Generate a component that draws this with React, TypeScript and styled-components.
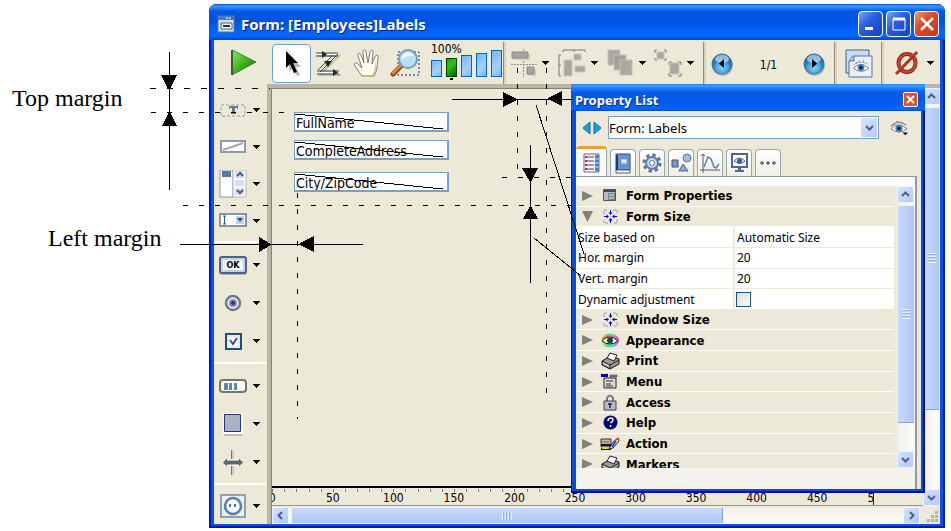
import React from "react";
import styled, { createGlobalStyle } from "styled-components";

const ui = `"DejaVu Sans Condensed", "Open Sans", sans-serif`;
const listFont = `"Noto Sans", sans-serif`;

const Global = createGlobalStyle`
  * { box-sizing: border-box; }
  body { margin: 0; background: #fff; font-family: ${ui}; font-size: 12px; color: #000; }
  button { font: inherit; color: inherit; border: 0; padding: 0; background: none; display: flex; align-items: center; justify-content: center; }
  svg { display: block; flex: none; }
`;

/* ---------- page ---------- */
const Page = styled.main`
  position: relative;
  display: grid;
  grid-template-columns: 209px minmax(0, 1fr);
  min-height: 100vh;
  padding: 4px 6px 5px 0;
`;
const Notes = styled.aside`
  font: 24px/28px "Liberation Serif", serif;
  padding: 80px 0 0 12px;
`;
const Note = styled.p<{ $indent?: boolean }>`
  margin: 0 0 112px;
  padding-left: ${(p) => (p.$indent ? 36 : 0)}px;
  white-space: nowrap;
`;
const Overlay = styled.svg`
  position: absolute;
  left: 0;
  top: 0;
  pointer-events: none;
`;

/* ---------- window ---------- */
const Window = styled.section`
  position: relative;
  display: flex;
  flex-direction: column;
  min-width: 0;
  border-radius: 8px 8px 0 0;
  background: #0a52e8;
  padding: 0 5px 4px;
  box-shadow: inset 2px 0 #0019cf, inset -2px 0 #001994, inset 0 -2px #001ba8;
`;
const TitleBar = styled.header`
  display: flex;
  align-items: center;
  gap: 6px;
  height: 36px;
  margin: 0 -5px;
  padding: 3px 6px 0 8px;
  border-radius: 8px 8px 0 0;
  background: linear-gradient(#0a50d8 0, #3a94ff 2px, #2684fc 4px, #0058e6 7px, #0053dd 18px, #0062fa 26px, #0068ff 32px, #0048c8 36px);
  color: #fff;
`;
const Title = styled.h1`
  flex: 1;
  margin: 0;
  font: bold 15px/24px "Noto Sans", sans-serif;
  text-shadow: 1px 1px #0a1883;
`;
const CaptionButtons = styled.div`
  display: flex;
  gap: 3px;
`;
const CaptionButton = styled.button<{ $close?: boolean }>`
  width: 25px;
  height: 26px;
  border: 1px solid #fff;
  border-radius: 4px;
  background: ${(p) =>
    p.$close
      ? "linear-gradient(135deg, #f0997d, #e0492a 40%, #c63a12)"
      : "linear-gradient(135deg, #7ba4f4, #2c5fe0 40%, #1040c8)"};
`;
const Toolbar = styled.div`
  display: flex;
  align-items: stretch;
  height: 44px;
  background: #ece9d8;
  padding-top: 2px;
`;
const Tool = styled.button<{ $w: number; $on?: boolean }>`
  width: ${(p) => p.$w}px;
  margin: 2px 0 1px;
  border: 1px solid ${(p) => (p.$on ? "#6f9fcc" : "transparent")};
  border-radius: 4px;
  background: ${(p) => (p.$on ? "#fff" : "none")};
`;
const MenuTools = styled.div`
  display: flex;
  padding-right: 5px;
`;
const MenuTool = styled.button`
  width: 48px;
  gap: 5px;
`;
const NullTool = styled.button`
  width: 56px;
  gap: 8px;
  padding-left: 4px;
`;
const Sep = styled.div`
  width: 3px;
  border-left: 1px solid #8f8c80;
  background: #d8d2bd;
`;
const ZoomLevel = styled.div`
  width: 80px;
  padding-left: 8px;
  font-size: 12px;
  line-height: 15px;
`;
const Bars = styled.div`
  display: flex;
  align-items: flex-end;
  gap: 4px;
  height: 20px;
`;
const Bar = styled.button<{ $h: number; $on?: boolean }>`
  width: 11px;
  height: ${(p) => p.$h}px;
  border: 1px solid ${(p) => (p.$on ? "#004000" : "#0068c0")};
  background: ${(p) =>
    p.$on ? "linear-gradient(135deg,#18b010,#30c010 40%,#006000)" : "linear-gradient(135deg,#70b8f8,#a4d0ff 60%,#78b8f8)"};
`;
const ZoomMark = styled.div`
  width: 3px;
  height: 2px;
  margin: 1px 0 0 19px;
  background: #000;
`;
const Pager = styled.div`
  flex: 1;
  display: flex;
  align-items: center;
  justify-content: space-between;
  padding: 4px 8px 0 5px;
  font-size: 12px;
`;

/* ---------- work area ---------- */
const Work = styled.div`
  flex: 1;
  display: grid;
  grid-template-columns: 53px minmax(0, 1fr);
  background: #ece9d8;
`;
const Palette = styled.nav`
  padding-top: 7px;
`;
const PaletteGroup = styled.div<{ $row: number; $line: boolean }>`
  display: grid;
  grid-auto-rows: ${(p) => p.$row}px;
  margin: ${(p) => (p.$line ? "2px 1px 0 0" : "0")};
  padding-top: ${(p) => (p.$line ? 3 : 0)}px;
  border-top: ${(p) => (p.$line ? "2px solid #fff" : "0")};
`;
const PaletteItem = styled.button`
  gap: 5px;
  padding-left: 4px;
  justify-content: flex-start;
`;
const Glyph = styled.span`
  display: flex;
  width: 30px;
  justify-content: center;
`;
const Editor = styled.div`
  display: grid;
  grid-template-columns: minmax(0, 1fr) 17px;
  grid-template-rows: 1fr 20px 18px;
  border: solid #bab6a4;
  border-width: 4px 0 0 4px;
  box-shadow: inset 1px 1px #85826f;
`;
const Canvas = styled.div`
  display: flex;
  flex-direction: column;
  align-items: flex-start;
  padding: 24px 0 0 23px;
`;
const FormField = styled.label<{ $gap: number }>`
  position: relative;
  display: block;
  width: 155px;
  height: 20px;
  margin-bottom: ${(p) => p.$gap}px;
  border: solid #7f9fbe;
  border-width: 1px 2px 2px 1px;
  background: #fff;
`;
const FieldInput = styled.input`
  display: block;
  width: 100%;
  height: 17px;
  padding: 2px 0 0 1px;
  border: 0;
  background: none;
  font: 14px/15px ${ui};
  outline: 0;
`;
const Strike = styled.svg`
  position: absolute;
  left: 0;
  top: 0;
`;
const Ruler = styled.div`
  margin-left: 1px;
  border-top: 2px solid #000;
  border-bottom: 1px solid #9a978a;
  overflow: hidden;
`;
const Scale = styled.div`
  width: 602px;
  height: 17px;
  overflow: hidden;
  border-right: 1px solid #222;
`;
const Marks = styled.div`
  display: grid;
  grid-template-columns: repeat(11, 1fr);
  width: 666px;
  margin-left: -30px;
`;
const Mark = styled.div`
  display: grid;
  grid-template-columns: repeat(5, 1fr);
  justify-items: center;
  font-size: 12px;
  line-height: 13px;
  & > i { width: 2px; height: 3px; background: linear-gradient(90deg, #fff 50%, #77756a 50%); margin-top: 1px; }
  & > span { grid-column: 1 / -1; }
`;

/* ---------- scroll bars ---------- */
const Scroll = styled.div<{ $x?: boolean }>`
  display: flex;
  flex-direction: ${(p) => (p.$x ? "row" : "column")};
  gap: 2px;
  min-width: 0;
  background: linear-gradient(${(p) => (p.$x ? "180deg" : "90deg")}, #f0efe9, #fffffb);
`;
const ScrollButton = styled.button`
  flex: none;
  width: 17px;
  height: 17px;
  border: 1px solid #eef3ff;
  border-radius: 2px;
  background: linear-gradient(135deg, #d5e1ff, #b2c9fa);
`;
const Thumb = styled.div<{ $x?: boolean; $share: number }>`
  flex: ${(p) => p.$share} 1 0;
  display: flex;
  align-items: center;
  justify-content: center;
  border-radius: 2px;
  border: 1px solid #eaf0ff;
  border-${(p) => (p.$x ? "right" : "bottom")}-color: #83a5dc;
  background: linear-gradient(${(p) => (p.$x ? "180deg" : "90deg")}, #c8d8ff, #bacdfa 60%, #aec6f8);
`;
const Grip = styled.div<{ $x?: boolean }>`
  width: ${(p) => (p.$x ? 10 : 8)}px;
  height: ${(p) => (p.$x ? 8 : 10)}px;
  background: repeating-linear-gradient(${(p) => (p.$x ? "90deg" : "180deg")}, #eef4ff 0 1px, #8cb0f8 1px 2px, #c0d2fb 2px 3px);
`;
const Track = styled.div<{ $share: number }>`
  flex: ${(p) => p.$share} 1 0;
`;
const Corner = styled.div`
  display: flex;
  align-items: flex-end;
  justify-content: flex-end;
  grid-row: 3;
  grid-column: 2;
`;
const VScrollCell = styled.div`
  grid-row: 1 / span 2;
  grid-column: 2;
  display: grid;
`;
const HScrollCell = styled.div`
  display: grid;
  margin: 1px 3px 0 1px;
`;

/* ---------- floating property list ---------- */
const Panel = styled.section`
  position: absolute;
  right: 20px;
  top: 80px;
  width: 354px;
  padding: 0 4px 4px 5px;
  background: #0a4ce0;
  box-shadow: inset 1px 0 #0019cf, inset -2px 0 #00138c, inset 0 -2px #00138c;
`;
const PanelTitle = styled.header`
  display: flex;
  align-items: center;
  justify-content: space-between;
  height: 27px;
  margin: 0 -4px 0 -5px;
  padding: 4px 7px 0 4px;
  background: linear-gradient(#1c60dc 0, #4aa0ff 1px, #2480f8 4px, #0858e4 9px, #0059ea 18px, #0068ff 25px, #0048c8 27px);
  color: #fff;
`;
const PanelHeading = styled.h2`
  margin: 0;
  font: bold 13px/18px ${listFont};
  text-shadow: 1px 1px #0a2a9a;
`;
const PanelClose = styled.button`
  width: 15px;
  height: 15px;
  border: 1px solid #fff;
  border-radius: 2px;
  background: #e0502e;
`;
const PanelBody = styled.div`
  background: #ece9d8;
  padding-right: 4px;
`;
const Picker = styled.div`
  display: flex;
  align-items: center;
  gap: 6px;
  padding: 5px 8px 7px 6px;
`;
const SelectBox = styled.div`
  position: relative;
  flex: 1;
  height: 23px;
  border: 1px solid #7f9db9;
  background: #fff;
`;
const Select = styled.select`
  appearance: none;
  width: 100%;
  height: 21px;
  border: 0;
  padding: 0 20px 0 0;
  background: none;
  font: 13px ${listFont};
  color: #000;
`;
const SelectArrow = styled.span`
  position: absolute;
  right: 1px;
  top: 1px;
  display: flex;
  align-items: center;
  justify-content: center;
  width: 16px;
  height: 19px;
  background: linear-gradient(135deg, #dbe5ff, #b4c8f8);
  pointer-events: none;
`;
const EyeButton = styled.button`
  margin-left: 4px;
  width: 20px;
`;
const Tabs = styled.div`
  display: flex;
  align-items: flex-end;
  gap: 3px;
  height: 30px;
`;
const Tab = styled.button<{ $on?: boolean }>`
  width: ${(p) => (p.$on ? 31 : 26)}px;
  height: ${(p) => (p.$on ? 30 : 27)}px;
  border: 1px solid #98a8ac;
  border-bottom: 0;
  border-radius: 4px 4px 0 0;
  background: ${(p) => (p.$on ? "#fcfcfe" : "linear-gradient(#fff, #f0efe6)")};
  ${(p) => p.$on && "border-top: 3px solid #f0a030; border-left: 0;"}
`;
const Sheet = styled.div`
  border: solid #919b9c;
  border-width: 1px 2px 0 0;
  padding-top: 9px;
  background: #fcfcfe;
`;
const ListArea = styled.div`
  display: grid;
  grid-template-columns: minmax(0, 1fr) 18px;
  gap: 3px;
  height: 282px;
  overflow: hidden;
  background: #ece9d8;
`;
const ListClip = styled.div`
  height: 282px;
  overflow: hidden;
`;
const ListFooter = styled.div`
  height: 21px;
  background: #f3f2ed;
`;
const Properties = styled.table`
  width: 100%;
  height: 289px;
  border-spacing: 0;
  table-layout: fixed;
  font: 12px/15px ${listFont};
  & td, & th { padding: 0; text-align: left; height: 20px; }
`;
const CategoryCell = styled.th`
  border-bottom: 1px solid #fff;
`;
const Category = styled.button`
  width: 100%;
  height: 18px;
  justify-content: flex-start;
  font: bold 13px/15px ${ui};
`;
const Disclosure = styled.span`
  display: flex;
  width: 23px;
  padding-left: 6px;
`;
const CategoryIcon = styled.span`
  display: flex;
  justify-content: center;
  width: 22px;
  margin-right: 5px;
`;
const NameCell = styled.td`
  width: 50%;
  border-bottom: 1px solid #ece9d8;
  border-right: 2px solid #ece9d8;
  background: #fff;
  && { padding-left: 2px; }
`;
const ValueCell = styled.td`
  border-bottom: 1px solid #ece9d8;
  background: #fff;
  && { padding-left: 2px; }
`;
const ValueInput = styled.input`
  display: block;
  width: 100%;
  height: 16px;
  border: 0;
  padding: 0;
  background: none;
  font: 12px/15px ${listFont};
`;
const Check = styled.input`
  appearance: none;
  display: block;
  width: 15px;
  height: 15px;
  margin: 0 0 0 -1px;
  border: 1px solid #1c5180;
  background: linear-gradient(135deg, #dcdcd7, #fff);
`;

/* ---------- icons ---------- */
const Caret = () => (
  <svg width="7" height="4" shapeRendering="crispEdges"><path d="M0 0h7v1h-1v1h-1v1h-1v1h-1v-1h-1v-1h-1v-1h-1z" /></svg>
);
const Chevron = ({ turn }: { turn: number }) => (
  <svg width="9" height="9" viewBox="0 0 9 9"><path d="M1 3l3.5 3.5L8 3" fill="none" stroke="#4d6185" strokeWidth="2" transform={`rotate(${turn} 4.5 4.5)`} /></svg>
);
const FormIcon = () => (
  <svg width="18" height="18"><rect x="1" y="1" width="16" height="16" fill="#d4e2ee" stroke="#5e7a9e" /><path d="M1 1h16v4H1z" fill="#4d7bbd" /><path d="M9 3h2M12 3h2" stroke="#fff" /><path d="M14 3h2" stroke="#e23" strokeWidth="2" /><path d="M4 8h11v6H4z" fill="#fff" stroke="#455f7d" /><path d="M6 11h7" stroke="#234" strokeWidth="2" /></svg>
);
const PlayIcon = () => (
  <svg width="27" height="29"><defs><linearGradient id="pl" x2="1" y2="1"><stop stopColor="#8fe85c" /><stop offset=".5" stopColor="#3db41e" /><stop offset="1" stopColor="#066a06" /></linearGradient></defs><path d="M2 1v25L26 13z" fill="url(#pl)" stroke="#557545" /><path d="M2 1v25" stroke="#375d33" strokeWidth="2" /></svg>
);
const PointerIcon = () => (
  <svg width="18" height="28"><path d="M6 4v18l4-4 4 8 3-1-4-8h5z" fill="#bbb" /><path d="M3 1v17l4-4 4 9 3-1-4-9h5z" /></svg>
);
const OrderIcon = () => (
  <svg width="26" height="28"><path d="M2 6h21L4 25h21" strokeWidth="2" stroke="#c4c0b0" fill="none" /><g fill="none" stroke="#3c4646"><path d="M0 3h22M0 6h22M22 4L4 22M18 4L2 20M1 21h22M1 24h22" /></g><path d="M1 4.500h20M4 22.500h18" stroke="#fff" /><path d="M6 1l5 3.500L6 8zM8 11h8l-4 6zM17 19l5 3.500-5 3.500z" fill="#202828" /></svg>
);
const HandIcon = () => (
  <svg width="28" height="29"><path d="M9 27L2 17c-2-3 1-4 3-2l4 4L5 7c-1-3 2-4 3-1l3 8-1-11c0-3 3-3 3 0l2 11 2-11c1-3 4-2 3 1l-1 11 3-7c1-3 4-2 3 1-1 6 0 11-4 18z" fill="#fffdf0" stroke="#7f7b78" /><path d="M10 26l9 0c3-4 3-9 4-15 1 8-1 14-3 17h-9z" fill="#d8b46a" opacity=".75" /></svg>
);
const MagnifierIcon = () => (
  <svg width="31" height="29"><path d="M8 3h21v23H8z" fill="none" stroke="#226" strokeDasharray="2 2" /><path d="M11 17L3 25" stroke="#8b4518" strokeWidth="5" strokeLinecap="round" /><path d="M11 16L3 24" stroke="#e98234" strokeWidth="3" strokeLinecap="round" /><circle cx="18" cy="10" r="9" fill="#b9e1f8" stroke="#6f9fc8" strokeWidth="2" /><path d="M12 10c0-7 9-9 12-3-5-1-9 1-12 3z" fill="#f2fbff" /></svg>
);
const AlignIcon = () => (
  <svg width="26" height="28"><path d="M12.500 0v28M0 15.500h26" stroke="#8f8e86" strokeDasharray="2 1" /><path d="M2 5h17v6H2zM17 20h8v7h-8z" fill="#d2cfbf" /><path d="M1 3h16v6H1zM16 18h7v7h-7z" fill="#a6a59e" stroke="#8b8a84" /></svg>
);
const DistributeIcon = () => (
  <svg width="28" height="29"><path d="M5 3V1h22v2M16 1v2M3 6H1v21h2M1 16h2" fill="none" stroke="#77766f" /><g fill="#a9a8a0" stroke="#c9c7ba"><path d="M6 11h8v16H6zM16 5h7v6h-7zM17 17h10v6H17z" /></g></svg>
);
const StackIcon = () => (
  <svg width="27" height="28"><g stroke="#c5c3b8"><path d="M1 1h12v15H1z" fill="#aaa99f" /><path d="M7 6h12v15H7z" fill="#a2a198" /><path d="M13 11h12v15H13z" fill="#aaa99f" /></g></svg>
);
const GroupIcon = () => (
  <svg width="28" height="28"><path d="M1 4V1h2M10 1h2v3M12 9v2h-2M3 11H1V9M15 16v-3h3M24 13h3v3M27 24v3h-3M18 27h-3v-3" fill="none" stroke="#7d7c74" /><path d="M3 3h7v7H3zM16 14h9v11h-9z" fill="#a9a8a0" stroke="#c5c3b8" /></svg>
);
const Ball = ({ flip }: { flip?: boolean }) => (
  <svg width="23" height="24"><defs><radialGradient id="ball" cy=".7"><stop stopColor="#7fd6f8" /><stop offset=".6" stopColor="#48a6de" /><stop offset="1" stopColor="#2470ae" /></radialGradient></defs><circle cx="11.500" cy="12.500" r="10.500" fill="#b8b7ae" /><circle cx="11" cy="11" r="10" fill="url(#ball)" stroke="#416f96" /><ellipse cx="11" cy="6" rx="7" ry="4" fill="#d8f1ff" opacity=".6" /><path d={flip ? "M9 6l5 4.500L9 15z" : "M13 6l-5 4.500L13 15z"} /></svg>
);
const Eye = ({ w }: { w: number }) => (
  <svg width={w} height={w} viewBox="0 0 20 20"><path d="M1 11Q9 2 19 11Q10 18 1 11z" fill="#f6f8fa" stroke="#777b80" /><path d="M1 8Q9 0 18 7M4 5l1 2M8 2v3M13 3l-1 2" fill="none" stroke="#8f8a85" strokeWidth="1.500" /><circle cx="10" cy="10.500" r="4" fill="#4c7db4" /><circle cx="10" cy="10.500" r="2" fill="#0a2850" /><path d="M14 15h6l-3 3z" /></svg>
);
const PreviewIcon = () => (
  <svg width="28" height="29"><path d="M1 1h23v23H1z" fill="#c3dcf4" stroke="#45639a" /><path d="M8 7h19v21H4V12z" fill="#e8f2fb" stroke="#5771a8" /><path d="M4 12h5V7" fill="#a5c4e4" stroke="#5771a8" /><svg x="7" y="10" width="18" height="17" viewBox="0 0 20 20"><path d="M1 11Q9 2 19 11Q10 18 1 11z" fill="#fff" stroke="#667" /><path d="M1 7Q9 1 18 6M4 3l1 3M8 1v3M13 1v3" fill="none" stroke="#8996a5" /><circle cx="10" cy="10" r="4" fill="#4c7db4" /><circle cx="10" cy="10" r="2" fill="#0a2850" /></svg></svg>
);
const NullIcon = () => (
  <svg width="24" height="26"><ellipse cx="12" cy="13" rx="8.500" ry="9" fill="none" stroke="#8d2015" strokeWidth="4" /><ellipse cx="12" cy="13" rx="8.500" ry="9" fill="none" stroke="#d6452c" strokeWidth="2" /><path d="M1 24L22 2" stroke="#a62a18" strokeWidth="3" /><path d="M1 23L21 2" stroke="#df5034" /></svg>
);

const paletteArt: Record<string, React.ReactNode> = {
  Text: <svg width="26" height="14"><path d="M1 2h24v11H1z" fill="none" stroke="#8f9daf" strokeWidth="1" strokeDasharray="3 2" /><path d="M9 3h9v3h-1V5h-2v5h1v1h-5v-1h1V5h-2v1H9z" fill="#6d7888" /></svg>,
  Field: <svg width="26" height="13"><path d="M1 1h24v11H1z" fill="#fff" stroke="#8c9aaa" strokeWidth="2" /><path d="M3 10L23 3" stroke="#a8a8a8" strokeWidth="2" /></svg>,
  "List box": <svg width="28" height="28"><path d="M1 0h13v27H1z" fill="#fff" stroke="#8996a5" /><path d="M3 1h9v6H3z" fill="#5b77a0" /><path d="M14 0h13v27H14z" fill="#fff" stroke="#b1b5be" /><path d="M16 1h9v7h-9zM16 10h9v6h-9zM16 18h9v7h-9z" fill="#d3def7" /><path d="M18 6l3-3 3 3M18 20l3 3 3-3" fill="none" stroke="#4d5c80" strokeWidth="2" /></svg>,
  "Combo box": <svg width="28" height="15"><path d="M1 1h26v12H1z" fill="#fff" stroke="#8495a8" strokeWidth="2" /><path d="M17 3h8v8h-8z" fill="#bfd0f2" /><path d="M18 5h6l-3 4z" fill="#384e78" /><path d="M4 3h3M4 11h3M5.500 3v8" fill="none" stroke="#384e78" /></svg>,
  Radio: <svg width="18" height="18"><circle cx="9" cy="9" r="7" fill="#e2f4f6" stroke="#687f8c" strokeWidth="2.500" /><circle cx="9" cy="9" r="4" fill="#8c86ae" /><circle cx="9" cy="9" r="2" fill="#3c2c68" /></svg>,
  "Check box": <svg width="17" height="17"><path d="M1 1h15v15H1z" fill="#d5f0f4" stroke="#294e6c" strokeWidth="2" /><path d="M4 4h9v9H4z" fill="#fff" /><path d="M5 7l3 4 4-6" fill="none" stroke="#4e4282" strokeWidth="2" /></svg>,
  Indicator: <svg width="28" height="15"><rect x="1" y="1" width="26" height="12" rx="3" fill="#fff" stroke="#77746d" strokeWidth="2" /><path d="M5 4h4v7H5zM10 4h3v7h-3zM15 4h3v7h-3z" fill="#5c86ae" /></svg>,
  Rectangle: <svg width="20" height="23"><path d="M1 20h18v3H1z" fill="#c0bcad" /><path d="M0 0h20v21H0z" fill="#fff" /><path d="M1.500 1.500h16v17h-16z" fill="#a7b3c3" stroke="#283275" /></svg>,
  Splitter: <svg width="20" height="25"><path d="M8.500 0v25" stroke="#777" /><path d="M10 0v25" stroke="#ccc" strokeWidth="2" /><path d="M1 9h18v7H1z" fill="#fff" opacity=".6" /><path d="M4 10h12M4 15h12" stroke="#fff" /><path d="M0 12.500l4-4v2h12v-2l4 4-4 4v-2H4v2z" fill="#5e6a6a" /></svg>,
  "Plug-in": <svg width="26" height="24"><path d="M1 1h24v22H1z" fill="#e9eff3" stroke="#8fa0b0" strokeWidth="2" /><circle cx="13" cy="12" r="8" fill="#f5f8fb" stroke="#5981a8" strokeWidth="2.500" /><path d="M10 10v3M15 10v3" stroke="#48739e" strokeWidth="2" /></svg>,
};
const OkGlyph = styled.span`
  width: 28px;
  height: 18px;
  border: 2px solid #4b6386;
  border-radius: 3px;
  background: #f5f8fc;
  box-shadow: inset 0 0 0 2px #c3d2e6, 0 1px #b5b2a5;
  font-size: 9px;
  line-height: 14px;
  font-weight: bold;
`;

const tabArt = [
  <svg key="0" width="17" height="20"><path d="M1 1h15v18H1z" fill="#f7f7fb" stroke="#5f688c" /><path d="M2 4h9M2 8h9M2 12h9M2 16h9" stroke="#446" /><path d="M2 4h2M2 8h2M2 12h2M2 16h2" stroke="#d22" strokeWidth="2" /><path d="M12 2h4v16h-4z" fill="#4c80c8" /><path d="M12 6h4M12 10h4M12 14h4" stroke="#c7dcf5" /></svg>,
  <svg key="1" width="18" height="21"><path d="M2 1h14v16H2z" fill="#6595d2" stroke="#2f4f83" /><path d="M2 17h14v3H2z" fill="#fff" stroke="#4c5774" /><path d="M3 2v15" stroke="#203c68" strokeWidth="2" /><path d="M7 6h6v5H7z" fill="#a8c8f0" /><path d="M8 8h4" stroke="#fff" strokeWidth="2" /></svg>,
  <svg key="2" width="20" height="20"><circle cx="10" cy="10" r="8" fill="none" stroke="#5c7198" strokeWidth="3" strokeDasharray="3.300 3" /><circle cx="10" cy="10" r="6" fill="#c2d8ef" stroke="#607da9" strokeWidth="2" /><circle cx="10" cy="10" r="2.500" fill="#fff" stroke="#607da9" /></svg>,
  <svg key="3" width="21" height="20"><path d="M1 7h6v7H1z" fill="#7899c6" stroke="#3d5078" /><circle cx="16" cy="5" r="4" fill="#a4bdda" stroke="#5976a5" /><path d="M12 11l5 7H8z" fill="#8dabd3" stroke="#4b638f" /></svg>,
  <svg key="4" width="20" height="20"><path d="M3 1v16h17M0 17h3M3 20v-3M1 3l2-2 2 2" fill="none" stroke="#4c5872" /><path d="M4 14L8 4l3 2 3 8 2 1 3-4" fill="none" stroke="#5d7fab" strokeWidth="1.500" /></svg>,
  <svg key="5" width="17" height="20"><path d="M1 1h15v13H1z" fill="#fff" stroke="#4c6594" strokeWidth="2" /><path d="M3 8q5-6 11 0q-5 5-11 0z" fill="#dce8f5" stroke="#667" /><circle cx="8.500" cy="8" r="2.500" fill="#355f9b" /><path d="M7 14h3v3H7zM4 17h9v2H4z" fill="#53658c" /></svg>,
  <svg key="6" width="18" height="20"><g fill="#8791aa" stroke="#555f7a"><circle cx="3" cy="10" r="1.300" /><circle cx="9" cy="10" r="1.300" /><circle cx="15" cy="10" r="1.300" /></g></svg>,
];
const tabNames = ["All", "Data", "Settings", "Objects", "Graph", "Display", "More"];

const sizeArt = <svg width="15" height="15"><path d="M1 5V1h4M10 1h4v4M14 10v4h-4M5 14H1v-4" fill="none" stroke="#999" strokeDasharray="3 1" /><path d="M7.500 1v4M7.500 10v4M1 7.500h4M10 7.500h4" stroke="#0000d8" strokeWidth="1" /><path d="M5.500 3.500h4L7.500 6zM5.500 11.500h4L7.500 9zM3.500 5.500v4L6 7.500zM11.500 5.500v4L9 7.500z" fill="#0000d8" /></svg>;
const printArt = <svg width="20" height="18"><path d="M2 9l9-5 8 3v5l-9 5-8-4z" fill="#999" stroke="#111" /><path d="M7 6l3-5 7 2-3 6z" fill="#fff" stroke="#222" /><path d="M2 9l8 4 9-5M10 13v4" fill="none" stroke="#222" /><path d="M3 11l6 3" stroke="#eee" /></svg>;
const rowArt: Record<string, React.ReactNode> = {
  "Form Properties": <svg width="14" height="13"><path d="M.5.5h12v11H.5z" fill="#b9b9c8" stroke="#555" /><path d="M1 1h12v2H1z" fill="#447" /><path d="M5 4h7v7H5z" fill="#6f8f88" /><path d="M6 6h5M6 9h5" stroke="#dee" /></svg>,
  "Form Size": sizeArt,
  "Window Size": sizeArt,
  Appearance: <svg width="20" height="15"><defs><linearGradient id="hue"><stop stopColor="#f9e24a" /><stop offset=".35" stopColor="#48dc6c" /><stop offset=".65" stopColor="#5bd8e8" /><stop offset="1" stopColor="#e338b8" /></linearGradient></defs><ellipse cx="10" cy="7.500" rx="9" ry="7" fill="url(#hue)" /><path d="M2 8q7-8 16 0q-8 6-16 0z" fill="#fff" stroke="#222" /><path d="M2 6q8-6 15 0" fill="none" stroke="#e44" /><circle cx="10" cy="7.500" r="3" fill="#104848" /></svg>,
  Print: printArt,
  Menu: <svg width="18" height="15"><path d="M0 0h7v3H0z" fill="#000090" /><path d="M9 1h7v2H9z" fill="#888" stroke="#222" strokeWidth=".5" /><path d="M3 4h12v10H3z" fill="#ddd" stroke="#222" /><path d="M5 7h7M5 10h5M5 12h7" stroke="#333" /></svg>,
  Access: <svg width="14" height="17"><path d="M4 8V4q3-5 6 0v4" fill="none" stroke="#777" strokeWidth="2" /><path d="M1 7h12v9H1z" fill="#b9b9ca" stroke="#444" /><path d="M5 10h4M7 10v4" stroke="#224" strokeWidth="1.500" /></svg>,
  Help: <svg width="15" height="15"><circle cx="7.500" cy="7.500" r="7" fill="#000078" /><path d="M5 6q0-3 3-3 2 0 2 2 0 1.500-2.500 3M7.500 10v2" fill="none" stroke="#fff" strokeWidth="1.500" /></svg>,
  Action: <svg width="20" height="14"><path d="M1 2h10v8H1z" fill="#bbb" stroke="#333" /><path d="M2 5h7" stroke="#d22" strokeWidth="1" /><path d="M1 8h10M1 12h10" stroke="#111" strokeWidth="2" /><path d="M2 10h7v2H2z" fill="#f5d020" /><path d="M9 12l4-7 5-4 1 3-6 7z" fill="#fff" stroke="#224" /><path d="M12 10l4-6" stroke="#24c" strokeWidth="2" /><path d="M16 3l3-2" stroke="#f40" strokeWidth="2" /></svg>,
  Markers: printArt,
};

const DisclosureMark = ({ open }: { open?: boolean }) => (
  <svg width="12" height="12"><path d={open ? "M0 1h11L5.500 12z" : "M0 1v10L11 6z"} fill="#808080" /></svg>
);

/* ---------- pieces ---------- */
const palette: { row: number; items: string[] }[] = [
  { row: 37, items: ["Text", "Field", "List box", "Combo box"] },
  { row: 38, items: ["Button", "Radio", "Check box"] },
  { row: 38, items: ["Indicator", "Rectangle", "Splitter"] },
  { row: 36, items: ["Plug-in"] },
];

function ScrollBar({ x, before, thumb, after }: { x?: boolean; before: string; thumb: number; after: string }) {
  return (
    <Scroll $x={x}>
      <ScrollButton aria-label={before}><Chevron turn={x ? 90 : 180} /></ScrollButton>
      <Thumb $x={x} $share={thumb}><Grip $x={x} /></Thumb>
      <Track $share={100 - thumb} />
      <ScrollButton aria-label={after}><Chevron turn={x ? 270 : 0} /></ScrollButton>
    </Scroll>
  );
}

function CategoryRow({ name, open }: { name: string; open?: boolean }) {
  return (
    <tr>
      <CategoryCell colSpan={2}>
        <Category aria-expanded={!!open}>
          <Disclosure><DisclosureMark open={open} /></Disclosure>
          <CategoryIcon>{rowArt[name]}</CategoryIcon>
          {name}
        </Category>
      </CategoryCell>
    </tr>
  );
}

function PropertyList() {
  const values = [["Size based on", "Automatic Size"], ["Hor. margin", "20"], ["Vert. margin", "20"]];
  return (
    <Panel>
      <PanelTitle>
        <PanelHeading>Property List</PanelHeading>
        <PanelClose aria-label="Close property list">
          <svg width="9" height="9"><path d="M1 1l7 7M8 1L1 8" stroke="#fff" strokeWidth="2" /></svg>
        </PanelClose>
      </PanelTitle>
      <PanelBody>
        <Picker>
          <svg width="20" height="14"><path d="M8 1v12L1 7z" fill="#18a0e0" stroke="#0d6ba8" /><path d="M12 1v12l7-6z" fill="#18a0e0" stroke="#0d6ba8" /></svg>
          <SelectBox>
            <Select aria-label="Object"><option>Form: Labels</option></Select>
            <SelectArrow><Chevron turn={0} /></SelectArrow>
          </SelectBox>
          <EyeButton aria-label="View options"><Eye w={18} /></EyeButton>
        </Picker>
        <Tabs role="tablist">
          {tabArt.map((art, i) => (
            <Tab key={i} role="tab" aria-label={tabNames[i]} aria-selected={i === 0} $on={i === 0}>{art}</Tab>
          ))}
        </Tabs>
        <Sheet>
          <ListArea>
            <ListClip>
              <Properties>
                <tbody>
                  <CategoryRow name="Form Properties" />
                  <CategoryRow name="Form Size" open />
                  {values.map(([name, value]) => (
                    <tr key={name}>
                      <NameCell>{name}</NameCell>
                      <ValueCell><ValueInput aria-label={name} defaultValue={value} /></ValueCell>
                    </tr>
                  ))}
                  <tr>
                    <NameCell><label htmlFor="dynamic">Dynamic adjustment</label></NameCell>
                    <ValueCell><Check id="dynamic" type="checkbox" /></ValueCell>
                  </tr>
                  {["Window Size", "Appearance", "Print", "Menu", "Access", "Help", "Action", "Markers"].map((n) => (
                    <CategoryRow key={n} name={n} />
                  ))}
                </tbody>
              </Properties>
            </ListClip>
            <ScrollBar before="Scroll list up" thumb={90} after="Scroll list down" />
          </ListArea>
          <ListFooter />
        </Sheet>
      </PanelBody>
    </Panel>
  );
}

function MarginArrows() {
  return (
    <Overlay width="951" height="531" aria-hidden="true" shapeRendering="crispEdges">
      <g stroke="#000" fill="none">
        <path d="M169.500 52v138M180 244.500h183M530.500 145v138M452 99.500h121M536 105l48 149M534 238l47 38" />
        <path d="M150 88.500h120" strokeDasharray="6 11" />
        <path d="M151 112.500h143M183 205.500h389M502 177.500h75" strokeDasharray="5 11" />
        <path d="M297.500 193v226M517.500 68v111M546.500 68v328" strokeDasharray="5 11" />
      </g>
      <path d="M161 75h16l-7 14h-2zM162 126h15l-7-14h-1zM259 237v15l12-7v-1zM314 236v16l-14-7v-2zM503 92v15l14-7v-1zM562 91v15l-14-7v-1zM522 168h16l-7 14h-1zM523 219h15l-7-13h-1z" />
    </Overlay>
  );
}

export default function App() {
  const fields: [string, number][] = [["FullName", 8], ["CompleteAddress", 12], ["City/ZipCode", 0]];
  const arrange: [string, React.ReactNode][] = [
    ["Align", <AlignIcon />], ["Distribute", <DistributeIcon />], ["Level", <StackIcon />], ["Group", <GroupIcon />],
  ];
  return (
    <>
      <Global />
      <Page>
        <Notes>
          <Note>Top margin</Note>
          <Note $indent>Left margin</Note>
        </Notes>
        <Window>
          <TitleBar>
            <FormIcon />
            <Title>Form: [Employees]Labels</Title>
            <CaptionButtons>
              <CaptionButton aria-label="Minimize"><svg width="14" height="14"><path d="M1 10h8v3H1z" fill="#fff" /></svg></CaptionButton>
              <CaptionButton aria-label="Maximize"><svg width="14" height="14"><path d="M1 2h12v11H1z" fill="none" stroke="#fff" /><path d="M1 2h12" stroke="#fff" strokeWidth="3" /></svg></CaptionButton>
              <CaptionButton $close aria-label="Close"><svg width="14" height="14"><path d="M1 1l12 12M13 1L1 13" stroke="#fff" strokeWidth="2.500" /></svg></CaptionButton>
            </CaptionButtons>
          </TitleBar>
          <Toolbar>
            <Tool $w={58} aria-label="Run form"><PlayIcon /></Tool>
            <Tool $w={39} $on aria-label="Select"><PointerIcon /></Tool>
            <Tool $w={36} aria-label="Entry order"><OrderIcon /></Tool>
            <Tool $w={40} aria-label="Move"><HandIcon /></Tool>
            <Tool $w={36} aria-label="Zoom"><MagnifierIcon /></Tool>
            <ZoomLevel>
              100%
              <Bars>
                {[17, 19, 22, 24, 27].map((h, i) => <Bar key={h} $h={h} $on={i === 1} aria-label={`Zoom step ${i + 1}`} />)}
              </Bars>
              <ZoomMark />
            </ZoomLevel>
            <Sep />
            <MenuTools>
              {arrange.map(([name, art]) => <MenuTool key={name} aria-label={name}>{art}<Caret /></MenuTool>)}
            </MenuTools>
            <Sep />
            <Pager>
              <button aria-label="Previous page"><Ball /></button>
              <span>1/1</span>
              <button aria-label="Next page"><Ball flip /></button>
            </Pager>
            <Sep />
            <Tool $w={44} aria-label="Preview"><PreviewIcon /></Tool>
            <Sep />
            <NullTool aria-label="No action"><NullIcon /><Caret /></NullTool>
          </Toolbar>
          <Work>
            <Palette>
              {palette.map((g, i) => (
                <PaletteGroup key={i} $row={g.row} $line={i > 0}>
                  {g.items.map((n) => (
                    <PaletteItem key={n} aria-label={n}>
                      <Glyph>{n === "Button" ? <OkGlyph>OK</OkGlyph> : paletteArt[n]}</Glyph>
                      <Caret />
                    </PaletteItem>
                  ))}
                </PaletteGroup>
              ))}
            </Palette>
            <Editor>
              <Canvas>
                {fields.map(([name, gap]) => (
                  <FormField key={name} $gap={gap}>
                    <FieldInput readOnly aria-label={name} value={name} />
                    <Strike width="152" height="17" shapeRendering="crispEdges"><path d="M0 1l148 15M0 1h6" stroke="#000" /></Strike>
                  </FormField>
                ))}
              </Canvas>
              <VScrollCell><ScrollBar before="Scroll up" thumb={80} after="Scroll down" /></VScrollCell>
              <Ruler>
                <Scale>
                  <Marks>
                    {Array.from({ length: 11 }, (_, i) => (
                      <Mark key={i}><i /><i /><i /><i /><i /><span>{i * 50}</span></Mark>
                    ))}
                  </Marks>
                </Scale>
              </Ruler>
              <HScrollCell><ScrollBar x before="Scroll left" thumb={71} after="Scroll right" /></HScrollCell>
              <Corner>
                <svg width="14" height="14" fill="#b5b19f"><path d="M9 1h3v3H9zM5 5h3v3H5zM9 5h3v3H9zM1 9h3v3H1zM5 9h3v3H5zM9 9h3v3H9z" /></svg>
              </Corner>
            </Editor>
          </Work>
          <PropertyList />
        </Window>
        <MarginArrows />
      </Page>
    </>
  );
}
